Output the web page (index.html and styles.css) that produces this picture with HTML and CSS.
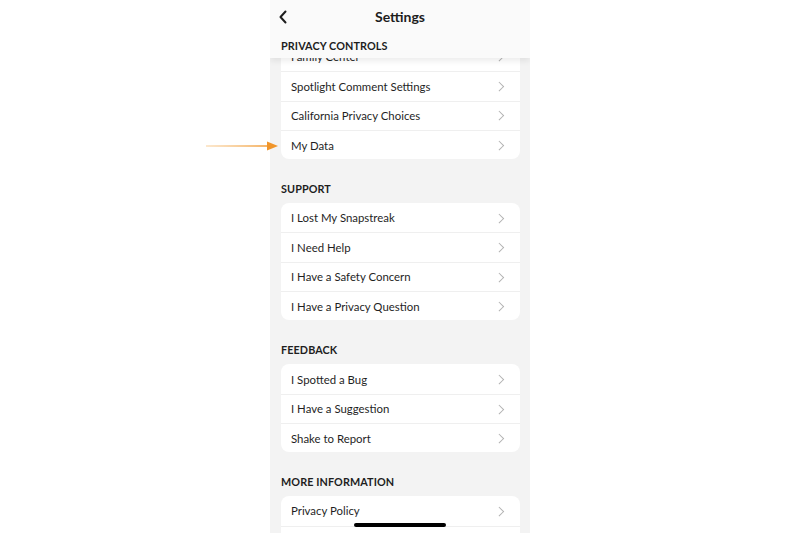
FILE: index.html
```html
<!DOCTYPE html>
<html lang="en">
<head>
    <meta charset="UTF-8">
    <title>Settings</title>
    <link rel="stylesheet" href="styles.css">
</head>
<body>
    <div class="stage">
        <svg class="pointer" width="80" height="12" viewBox="0 0 80 12">
            <defs>
                <linearGradient id="fade" gradientUnits="userSpaceOnUse" x1="0" y1="6" x2="66" y2="6">
                    <stop offset="0" stop-color="#f5b15a" stop-opacity="0.4"/>
                    <stop offset="1" stop-color="#f0952a"/>
                </linearGradient>
            </defs>
            <path d="M0 6 H66" stroke="url(#fade)" stroke-width="1.6"/>
            <path d="M61 1.5 L72 6 L61 10.5 Z" fill="#f0952a"/>
        </svg>

        <div class="phone">
            <header class="topbar">
                <div class="title-row">
                    <svg class="back" width="10" height="14" viewBox="0 0 10 14">
                        <path d="M7.5 1.5 L2.5 7 L7.5 12.5" fill="none" stroke="#1d1d1d" stroke-width="2" stroke-linecap="round" stroke-linejoin="round"/>
                    </svg>
                    <span class="title">Settings</span>
                </div>
                <div class="section-label sticky">PRIVACY CONTROLS</div>
            </header>

            <main class="content">
                <ul class="card">
                    <li class="row">Family Center<span class="chev"></span></li>
                    <li class="row">Spotlight Comment Settings<span class="chev"></span></li>
                    <li class="row">California Privacy Choices<span class="chev"></span></li>
                    <li class="row">My Data<span class="chev"></span></li>
                </ul>

                <div class="section-label">SUPPORT</div>
                <ul class="card">
                    <li class="row">I Lost My Snapstreak<span class="chev"></span></li>
                    <li class="row">I Need Help<span class="chev"></span></li>
                    <li class="row">I Have a Safety Concern<span class="chev"></span></li>
                    <li class="row">I Have a Privacy Question<span class="chev"></span></li>
                </ul>

                <div class="section-label">FEEDBACK</div>
                <ul class="card">
                    <li class="row">I Spotted a Bug<span class="chev"></span></li>
                    <li class="row">I Have a Suggestion<span class="chev"></span></li>
                    <li class="row">Shake to Report<span class="chev"></span></li>
                </ul>

                <div class="section-label">MORE INFORMATION</div>
                <ul class="card">
                    <li class="row">Privacy Policy<span class="chev"></span></li>
                    <li class="row">Terms of Service<span class="chev"></span></li>
                </ul>
            </main>

            <div class="home-bar"></div>
        </div>
    </div>
</body>
</html>
```

FILE: styles.css
```css
* {
    margin: 0;
    padding: 0;
    box-sizing: border-box;
}
body {
    background: #ffffff;
    font-family: Lato, "Noto Sans", sans-serif;
    color: #1e1e1e;
}
.stage {
    position: relative;
    width: 800px;
    height: 533px;
    display: flex;
    justify-content: center;
    overflow: hidden;
}
.pointer {
    position: absolute;
    left: 206px;
    top: 140px;
    z-index: 5;
}
.phone {
    position: relative;
    width: 260px;
    height: 533px;
    background: #f3f3f3;
    overflow: hidden;
}
.topbar {
    position: absolute;
    top: 0;
    left: 0;
    width: 100%;
    height: 58px;
    background: #fafafa;
    box-shadow: 0 3px 6px rgba(0, 0, 0, 0.08);
    z-index: 2;
}
.title-row {
    height: 34px;
    display: flex;
    align-items: center;
    justify-content: center;
    position: relative;
}
.back {
    position: absolute;
    left: 8px;
    top: 10px;
}
.title {
    font-size: 14px;
    font-weight: 700;
    color: #1d1d1d;
    padding-bottom: 1px;
}
.section-label {
    font-size: 10.8px;
    font-weight: 700;
    letter-spacing: 0.1px;
    color: #1e1e1e;
    padding: 23px 11px 8px;
    line-height: 13px;
}
.section-label.sticky {
    padding: 1px 11px 0;
    line-height: 22px;
}
.content {
    padding: 42px 10px 0 11px;
}
.content > .section-label {
    padding-left: 0;
}
.card {
    list-style: none;
    background: #ffffff;
    border-radius: 8px;
}
.row {
    height: 29.3px;
    display: flex;
    align-items: center;
    justify-content: space-between;
    padding: 0 18px 0 10px;
    font-size: 11.4px;
    color: #1f1f1f;
    border-top: 1px solid #efefef;
}
.row:first-child {
    border-top: none;
}
.chev {
    width: 6.5px;
    height: 6.5px;
    border-top: 1.4px solid #b2b2b2;
    border-right: 1.4px solid #b2b2b2;
    transform: rotate(45deg);
}
.home-bar {
    position: absolute;
    left: 84px;
    bottom: 6px;
    width: 92px;
    height: 4px;
    border-radius: 2px;
    background: #000000;
    z-index: 3;
}
```
